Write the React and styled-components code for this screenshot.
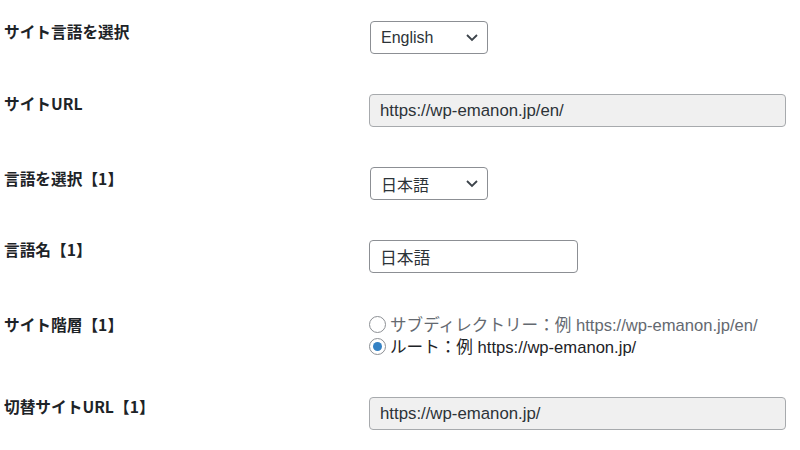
import React from "react";
import styled, { createGlobalStyle } from "styled-components";

const Global = createGlobalStyle`
  html, body { margin: 0; padding: 0; background: #ffffff; }
  body { font-family: "Liberation Sans", "Noto Sans CJK JP", sans-serif; color: #1d2327; }
  * { box-sizing: border-box; }
`;

const Form = styled.div`
  display: grid;
  grid-template-columns: 365px 1fr;
  row-gap: 40px;
  padding: 21px 14px 0 4px;
  width: 800px;
`;

const Label = styled.div`
  font-family: "Noto Sans CJK JP", sans-serif;
  font-weight: 700;
  font-size: 15.7px;
  line-height: 20px;
  color: #1d2327;
  margin-top: ${(p) => p.$offset || 0}px;
`;

const Cell = styled.div`
  display: flex;
  flex-direction: column;
  align-items: flex-start;
`;

const SelectBox = styled.div`
  display: flex;
  align-items: center;
  justify-content: space-between;
  width: 118px;
  height: 33px;
  margin-left: 1px;
  padding: 0 8px 0 10px;
  border: 1px solid #8c8f94;
  border-radius: 4px;
  background: #fff;
  font-family: "Liberation Sans", "Noto Sans CJK JP", sans-serif;
  font-size: 16px;
  color: #2c3338;
`;

const TextField = styled.input`
  width: ${(p) => p.$width}px;
  height: 33px;
  padding: 0 10px;
  border: 1px solid ${(p) => (p.$disabled ? "#a7aaad" : "#8c8f94")};
  border-radius: 4px;
  background: ${(p) => (p.$disabled ? "#f0f0f0" : "#ffffff")};
  font-family: "Liberation Sans", "Noto Sans CJK JP", sans-serif;
  font-size: 16.8px;
  color: #2c3338;
  outline: none;
`;

const RadioGroup = styled.div`
  display: flex;
  flex-direction: column;
`;

const RadioRow = styled.label`
  display: flex;
  align-items: center;
  height: 22px;
  gap: 4px;
  font-family: "Liberation Sans", "Noto Sans CJK JP", sans-serif;
  font-size: 16.6px;
  color: ${(p) => (p.$checked ? "#1d2327" : "#646970")};
`;

const RadioCircle = styled.span`
  display: inline-flex;
  align-items: center;
  justify-content: center;
  width: 17px;
  height: 17px;
  border-radius: 50%;
  border: 1px solid #8c8f94;
  background: #fff;
  flex: none;
  &::after {
    content: "";
    width: 9px;
    height: 9px;
    border-radius: 50%;
    background: ${(p) => (p.$checked ? "#3582c4" : "transparent")};
  }
`;

const Chevron = () => (
  <svg width="14" height="9" viewBox="0 0 14 9" aria-hidden="true">
    <polyline points="2,2 7,7 12,2" fill="none" stroke="#3c434a" strokeWidth="1.8" />
  </svg>
);

const Select = ({ value }) => (
  <SelectBox>
    <span>{value}</span>
    <Chevron />
  </SelectBox>
);

export default function App() {
  return (
    <>
      <Global />
      <Form>
        <Label $offset={1}>サイト言語を選択</Label>
        <Cell>
          <Select value="English" />
        </Cell>

        <Label>サイトURL</Label>
        <Cell>
          <TextField $width={417} $disabled readOnly value="https://wp-emanon.jp/en/" />
        </Cell>

        <Label $offset={2}>言語を選択【1】</Label>
        <Cell>
          <Select value="日本語" />
        </Cell>

        <Label>言語名【1】</Label>
        <Cell>
          <TextField $width={209} readOnly value="日本語" />
        </Cell>

        <Label $offset={2}>サイト階層【1】</Label>
        <Cell>
          <RadioGroup>
            <RadioRow>
              <RadioCircle />
              サブディレクトリー：例 https://wp-emanon.jp/en/
            </RadioRow>
            <RadioRow $checked>
              <RadioCircle $checked />
              ルート：例 https://wp-emanon.jp/
            </RadioRow>
          </RadioGroup>
        </Cell>

        <Label>切替サイトURL【1】</Label>
        <Cell>
          <TextField $width={417} $disabled readOnly value="https://wp-emanon.jp/" />
        </Cell>
      </Form>
    </>
  );
}
